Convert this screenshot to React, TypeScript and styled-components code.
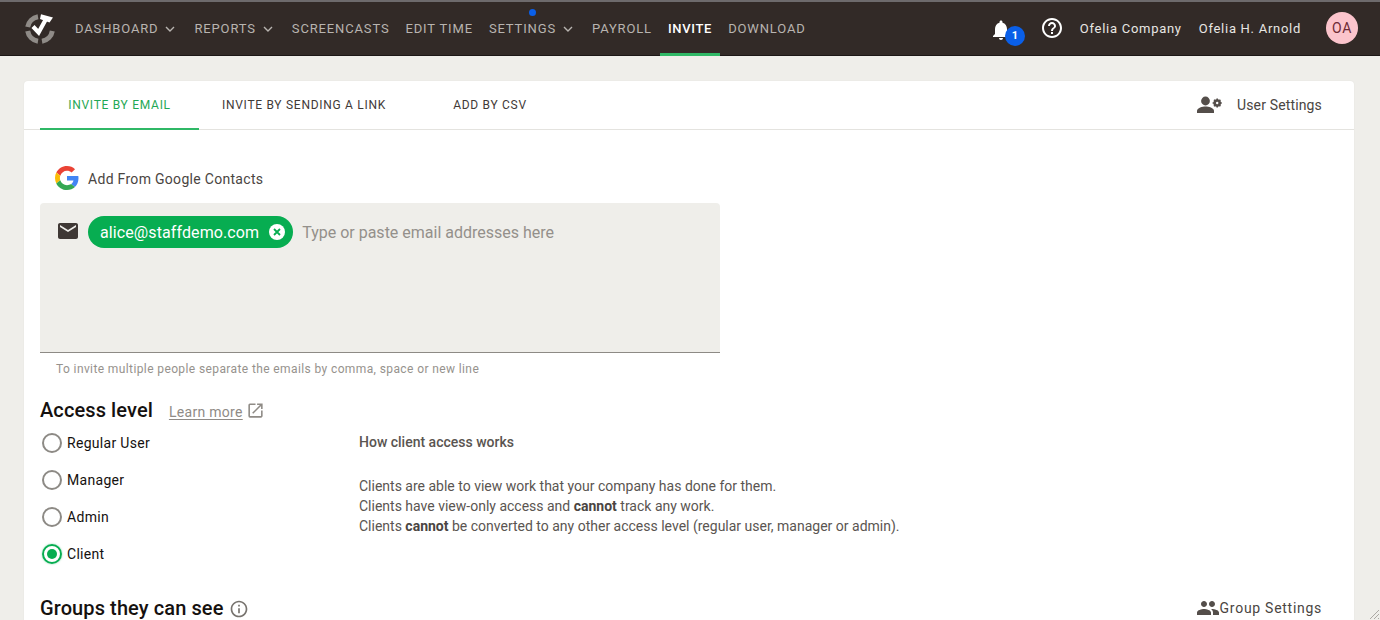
import React from "react";
import styled, { createGlobalStyle } from "styled-components";

const Global = createGlobalStyle`
  html, body { margin: 0; padding: 0; height: 100%; overflow: hidden; background: #efeeea; }
  body { font-family: Roboto, "Liberation Sans", sans-serif; color: #3a3533; }
  * { box-sizing: border-box; }
`;

const Page = styled.div`
  position: relative;
  width: 1380px;
  height: 620px;
  overflow: hidden;
  background: #efeeea;
`;

const Header = styled.header`
  height: 56px;
  background: #322a27;
  border-top: 2px solid #6d6a6c;
  border-bottom: 1px solid #1c1716;
  display: flex;
  align-items: stretch;
  padding: 0 22px 0 24px;
`;

const Logo = styled.svg`
  width: 32px;
  height: 32px;
  align-self: center;
  margin-right: 19px;
`;

const Nav = styled.nav`
  display: flex;
  align-items: stretch;
  flex: 1;
`;

const NavItem = styled.div<{ $active?: boolean }>`
  position: relative;
  display: flex;
  align-items: center;
  padding: 0 8px;
  margin-top: -2px;
  height: 56px;
  font-size: 13px;
  font-weight: ${(p) => (p.$active ? 500 : 400)};
  letter-spacing: ${(p) => (p.$active ? "0.7px" : "0.85px")};
  color: ${(p) => (p.$active ? "#ffffff" : "#b8b4b0")};
  &:first-child { padding-left: 0; }
`;

const ActiveBar = styled.span`
  position: absolute;
  left: 0;
  right: 0;
  bottom: 0;
  height: 3px;
  background: #2fb866;
`;

const Dot = styled.span`
  position: absolute;
  left: 48px;
  top: 9px;
  width: 7px;
  height: 7px;
  border-radius: 50%;
  background: #0a5fe8;
`;

const Chevron = styled.svg`
  width: 10px;
  height: 6px;
  margin-left: 7px;
  margin-right: 3px;
  margin-top: 2px;
`;

const Right = styled.div`
  display: flex;
  align-items: center;
  margin-top: -1px;
`;

const BellWrap = styled.div`
  position: relative;
  width: 24px;
  height: 24px;
  margin-right: 27px;
  margin-top: 3px;
`;

const Badge = styled.span`
  position: absolute;
  left: 16px;
  top: 8px;
  width: 20px;
  height: 20px;
  border-radius: 50%;
  background: #0a5fe8;
  color: #fff;
  font-size: 11px;
  font-weight: 700;
  display: flex;
  align-items: center;
  justify-content: center;
`;

const HelpIcon = styled.svg`
  width: 24px;
  height: 24px;
  margin-right: 16px;
`;

const UserText = styled.span`
  font-size: 13px;
  letter-spacing: 0.72px;
  color: #e8e6e3;
  margin-right: 17px;
`;

const Avatar = styled.div`
  width: 32px;
  height: 32px;
  border-radius: 50%;
  background: #fbc4cc;
  color: #6d2a35;
  font-size: 14px;
  letter-spacing: 0.8px;
  display: flex;
  align-items: center;
  justify-content: center;
  margin-left: 8px;
`;

const Card = styled.main`
  margin: 25px 26px 0 24px;
  height: 560px;
  background: #fff;
  border-radius: 4px;
  box-shadow: 0 0 2px rgba(0, 0, 0, 0.06);
`;

const TabBar = styled.div`
  height: 49px;
  border-bottom: 1px solid #e4e3df;
  display: flex;
  align-items: stretch;
  padding: 0 32px 0 16px;
`;

const Tab = styled.div<{ $active?: boolean; $w: number }>`
  position: relative;
  width: ${(p) => p.$w}px;
  display: flex;
  align-items: center;
  justify-content: center;
  font-size: 12px;
  font-weight: 400;
  letter-spacing: 0.72px;
  color: ${(p) => (p.$active ? "#1fa855" : "#3f3a37")};
  ${(p) => p.$active && "&::after { content: ''; position: absolute; left: 0; right: 0; bottom: -1px; height: 2px; background: #2fb866; }"}
`;

const SettingsLink = styled.div`
  margin-left: auto;
  display: flex;
  align-items: center;
  font-size: 14px;
  letter-spacing: 0.15px;
  color: #4a4542;
`;

const SettingsIcon = styled.svg`
  width: 26px;
  height: 24px;
  margin-right: 14px;
`;

const Body = styled.div`
  padding: 0 33px 0 16px;
`;

const GoogleRow = styled.div`
  height: 73px;
  padding: 37px 0 0 15px;
  display: flex;
  align-items: flex-start;
  font-size: 14px;
  color: #4a4542;
  letter-spacing: 0.3px;
`;

const GoogleIcon = styled.svg`
  width: 24px;
  height: 24px;
  margin-right: 9px;
  margin-top: -1px;
`;

const GoogleLabel = styled.span`
  line-height: 24px;
`;

const EmailBox = styled.div`
  width: 680px;
  height: 150px;
  background: #efeeea;
  border-bottom: 1px solid #8d8a85;
  border-radius: 4px 4px 0 0;
  padding: 13px 8px 0 16px;
  display: flex;
  align-items: flex-start;
`;

const MailIcon = styled.svg`
  width: 24px;
  height: 24px;
  margin-top: 3px;
  margin-right: 8px;
  flex: none;
`;

const Chip = styled.div`
  height: 32px;
  border-radius: 16px;
  background: #07ad51;
  color: #fff;
  font-size: 16px;
  letter-spacing: 0.1px;
  display: flex;
  align-items: center;
  padding: 0 7px 0 12px;
  margin-right: 9px;
`;

const ChipClose = styled.svg`
  width: 18px;
  height: 18px;
  margin-left: 9px;
`;

const Placeholder = styled.span`
  font-size: 16px;
  line-height: 33px;
  color: #94908b;
`;

const Hint = styled.div`
  font-size: 12px;
  letter-spacing: 0.39px;
  color: #96928d;
  padding: 8px 0 0 16px;
  line-height: 16px;
`;

const TitleRow = styled.div`
  display: flex;
  align-items: center;
  margin-top: 19px;
  height: 28px;
`;

const Title = styled.h2`
  margin: 0;
  font-size: 20px;
  font-weight: 500;
  letter-spacing: 0.1px;
  line-height: 28px;
  color: #15110f;
`;

const LearnMore = styled.a`
  font-size: 14px;
  letter-spacing: 0.3px;
  color: #8f8b86;
  text-decoration: underline;
  text-underline-offset: 2px;
  margin-left: 16px;
  margin-top: 3px;
`;

const ExternalIcon = styled.svg`
  width: 19px;
  height: 19px;
  margin-left: 3.5px;
  margin-top: 1px;
`;

const Columns = styled.div`
  display: flex;
  align-items: flex-start;
`;

const Radios = styled.div`
  width: 319px;
  padding-left: 1.5px;
  display: flex;
  flex-direction: column;
`;

const RadioRow = styled.label`
  height: 37px;
  display: flex;
  align-items: center;
  font-size: 14px;
  letter-spacing: 0.3px;
  color: #15110f;
`;

const RadioMark = styled.span<{ $on?: boolean }>`
  width: 20px;
  height: 20px;
  border-radius: 50%;
  border: 2px solid ${(p) => (p.$on ? "#07ad51" : "#8d8a85")};
  margin-right: 5.5px;
  display: flex;
  align-items: center;
  justify-content: center;
  ${(p) => p.$on && "box-shadow: 0 0 2px rgba(7, 173, 81, 0.5);"}
  &::after {
    content: "";
    display: ${(p) => (p.$on ? "block" : "none")};
    width: 10px;
    height: 10px;
    border-radius: 50%;
    background: #07ad51;
  }
`;

const Explain = styled.div`
  font-size: 14px;
  line-height: 20px;
  color: #5a5551;
  padding-top: 8px;
`;

const ExplainHead = styled.div`
  font-weight: 500;
  margin-bottom: 24px;
`;

const Strong = styled.b`
  font-weight: 700;
  color: #4a4542;
`;

const GroupsRow = styled.div`
  display: flex;
  align-items: center;
  justify-content: space-between;
  height: 28px;
  margin-top: 22px;
`;

const GroupsLeft = styled.div`
  display: flex;
  align-items: center;
`;

const InfoIcon = styled.svg`
  width: 20px;
  height: 20px;
  margin-left: 6px;
  margin-top: 1px;
`;

const GroupSettings = styled.div`
  display: flex;
  align-items: center;
  font-size: 14px;
  letter-spacing: 0.72px;
  color: #4a4542;
  margin-right: -1px;
`;

const Grip = styled.svg`
  position: absolute;
  right: 0;
  bottom: 0;
  width: 12px;
  height: 12px;
`;

const Down = () => (
  <Chevron viewBox="0 0 10 6">
    <path d="M1 1l4 4 4-4" fill="none" stroke="#b8b4b0" strokeWidth="1.4" />
  </Chevron>
);

const navItems = [
  { label: "DASHBOARD", menu: true },
  { label: "REPORTS", menu: true },
  { label: "SCREENCASTS" },
  { label: "EDIT TIME" },
  { label: "SETTINGS", menu: true, dot: true },
  { label: "PAYROLL" },
  { label: "INVITE", active: true },
  { label: "DOWNLOAD" },
];

export default function App() {
  return (
    <Page>
      <Global />
      <Header>
        <Logo viewBox="0 0 32 32">
          <g fill="none" stroke="#8f8b87" strokeWidth="5">
            <path d="M3.7 14A12.5 12.5 0 0 1 14 3.7" />
            <path d="M3.7 18A12.5 12.5 0 0 0 14 28.3" />
            <path d="M18 28.3A12.5 12.5 0 0 0 28.3 18" />
          </g>
          <path d="M17 1.2L29 4.5 25.5 9.5 16 6z" fill="#fff" />
          <path d="M9 13.5l5.6 6L22 6" fill="none" stroke="#fff" strokeWidth="4.2" />
        </Logo>
        <Nav>
          {navItems.map((n) => (
            <NavItem key={n.label} $active={n.active}>
              {n.dot && <Dot />}
              {n.label}
              {n.menu && <Down />}
              {n.active && <ActiveBar />}
            </NavItem>
          ))}
        </Nav>
        <Right>
          <BellWrap>
            <svg width="24" height="24" viewBox="0 0 24 24">
              <path fill="#fff" d="M12 22c1.1 0 2-.9 2-2h-4c0 1.1.9 2 2 2zm6-6v-5c0-3.07-1.63-5.64-4.5-6.32V4c0-.83-.67-1.5-1.5-1.5s-1.5.67-1.5 1.5v.68C7.64 5.36 6 7.92 6 11v5l-2 2v1h16v-1l-2-2z" />
            </svg>
            <Badge>1</Badge>
          </BellWrap>
          <HelpIcon viewBox="0 0 24 24">
            <path fill="#fff" d="M11 18h2v-2h-2v2zm1-16C6.48 2 2 6.48 2 12s4.48 10 10 10 10-4.48 10-10S17.52 2 12 2zm0 18c-4.41 0-8-3.59-8-8s3.59-8 8-8 8 3.59 8 8-3.59 8-8 8zm0-14c-2.21 0-4 1.79-4 4h2c0-1.1.9-2 2-2s2 .9 2 2c0 2-3 1.75-3 5h2c0-2.25 3-2.5 3-5 0-2.21-1.79-4-4-4z" />
          </HelpIcon>
          <UserText>Ofelia Company</UserText>
          <UserText>Ofelia H. Arnold</UserText>
          <Avatar>OA</Avatar>
        </Right>
      </Header>
      <Card>
        <TabBar>
          <Tab $active $w={159}>INVITE BY EMAIL</Tab>
          <Tab $w={210}>INVITE BY SENDING A LINK</Tab>
          <Tab $w={162}>ADD BY CSV</Tab>
          <SettingsLink>
            <SettingsIcon viewBox="0 0 26 24">
              <circle cx="8.5" cy="8" r="4.4" fill="#544e4a" />
              <path fill="#544e4a" d="M0 20v-2.2c0-2.7 5.5-4.2 8.5-4.2s8.5 1.5 8.5 4.2V20z" />
              <g transform="translate(20.2 10)">
                <circle r="2.7" fill="none" stroke="#544e4a" strokeWidth="2.2" />
                <path stroke="#544e4a" strokeWidth="1.6" d="M0-4.6V4.6M-4.6 0H4.6M-3.2-3.2l6.4 6.4M3.2-3.2l-6.4 6.4" />
                <circle r="1.2" fill="#fff" />
              </g>
            </SettingsIcon>
            User Settings
          </SettingsLink>
        </TabBar>
        <Body>
          <GoogleRow>
            <GoogleIcon viewBox="0 0 48 48">
              <path fill="#EA4335" d="M24 9.5c3.54 0 6.71 1.22 9.21 3.6l6.85-6.85C35.9 2.38 30.47 0 24 0 14.62 0 6.51 5.38 2.56 13.22l7.98 6.19C12.43 13.72 17.74 9.5 24 9.5z" />
              <path fill="#4285F4" d="M46.98 24.55c0-1.57-.15-3.09-.38-4.55H24v9.02h12.94c-.58 2.96-2.26 5.48-4.78 7.18l7.73 6c4.51-4.18 7.09-10.36 7.09-17.65z" />
              <path fill="#FBBC05" d="M10.53 28.59c-.48-1.45-.76-2.99-.76-4.59s.27-3.14.76-4.59l-7.98-6.19C.92 16.46 0 20.12 0 24c0 3.88.92 7.54 2.56 10.78l7.97-6.19z" />
              <path fill="#34A853" d="M24 48c6.48 0 11.93-2.13 15.89-5.81l-7.73-6c-2.15 1.45-4.92 2.3-8.16 2.3-6.26 0-11.57-4.22-13.47-9.91l-7.98 6.19C6.51 42.62 14.62 48 24 48z" />
            </GoogleIcon>
            <GoogleLabel>Add From Google Contacts</GoogleLabel>
          </GoogleRow>
          <EmailBox>
            <MailIcon viewBox="0 0 24 24">
              <path fill="#3f3835" d="M20 4H4c-1.1 0-1.99.9-1.99 2L2 18c0 1.1.9 2 2 2h16c1.1 0 2-.9 2-2V6c0-1.1-.9-2-2-2zm0 4l-8 5-8-5V6l8 5 8-5v2z" />
            </MailIcon>
            <Chip>
              alice@staffdemo.com
              <ChipClose viewBox="0 0 18 18">
                <circle cx="9" cy="9" r="8" fill="#fff" />
                <path d="M6 6l6 6M12 6l-6 6" stroke="#07ad51" strokeWidth="1.8" />
              </ChipClose>
            </Chip>
            <Placeholder>Type or paste email addresses here</Placeholder>
          </EmailBox>
          <Hint>To invite multiple people separate the emails by comma, space or new line</Hint>
          <TitleRow>
            <Title>Access level</Title>
            <LearnMore>Learn more</LearnMore>
            <ExternalIcon viewBox="0 0 24 24">
              <path fill="#8f8b86" d="M19 19H5V5h7V3H5a2 2 0 0 0-2 2v14a2 2 0 0 0 2 2h14c1.1 0 2-.9 2-2v-7h-2v7zM14 3v2h3.59l-9.83 9.83 1.41 1.41L19 6.41V10h2V3h-7z" />
            </ExternalIcon>
          </TitleRow>
          <Columns>
            <Radios>
              <RadioRow><RadioMark />Regular User</RadioRow>
              <RadioRow><RadioMark />Manager</RadioRow>
              <RadioRow><RadioMark />Admin</RadioRow>
              <RadioRow><RadioMark $on />Client</RadioRow>
            </Radios>
            <Explain>
              <ExplainHead>How client access works</ExplainHead>
              <div>Clients are able to view work that your company has done for them.</div>
              <div>Clients have view-only access and <Strong>cannot</Strong> track any work.</div>
              <div>Clients <Strong>cannot</Strong> be converted to any other access level (regular user, manager or admin).</div>
            </Explain>
          </Columns>
          <GroupsRow>
            <GroupsLeft>
              <Title>Groups they can see</Title>
              <InfoIcon viewBox="0 0 24 24">
                <path fill="#77736e" d="M11 7h2v2h-2zm0 4h2v6h-2zm1-9C6.48 2 2 6.48 2 12s4.48 10 10 10 10-4.48 10-10S17.52 2 12 2zm0 18c-4.41 0-8-3.59-8-8s3.59-8 8-8 8 3.59 8 8-3.59 8-8 8z" />
              </InfoIcon>
            </GroupsLeft>
            <GroupSettings>
              <svg width="24" height="24" viewBox="0 0 24 24">
                <path fill="#544e4a" d="M16 11c1.66 0 2.99-1.34 2.99-3S17.66 5 16 5s-3 1.34-3 3 1.34 3 3 3zm-8 0c1.66 0 2.99-1.34 2.99-3S9.66 5 8 5 5 6.34 5 8s1.34 3 3 3zm0 2c-2.33 0-7 1.17-7 3.5V19h14v-2.5c0-2.33-4.67-3.5-7-3.5zm8 0c-.29 0-.62.02-.97.05 1.16.84 1.97 1.97 1.97 3.45V19h6v-2.5c0-2.33-4.67-3.5-7-3.5z" />
              </svg>
              Group Settings
            </GroupSettings>
          </GroupsRow>
        </Body>
      </Card>
      <Grip viewBox="0 0 12 12">
        <path d="M11 2L2 11M11 6l-5 5M11 10l-1 1" stroke="#9a9792" strokeWidth="0.8" fill="none" />
      </Grip>
    </Page>
  );
}
